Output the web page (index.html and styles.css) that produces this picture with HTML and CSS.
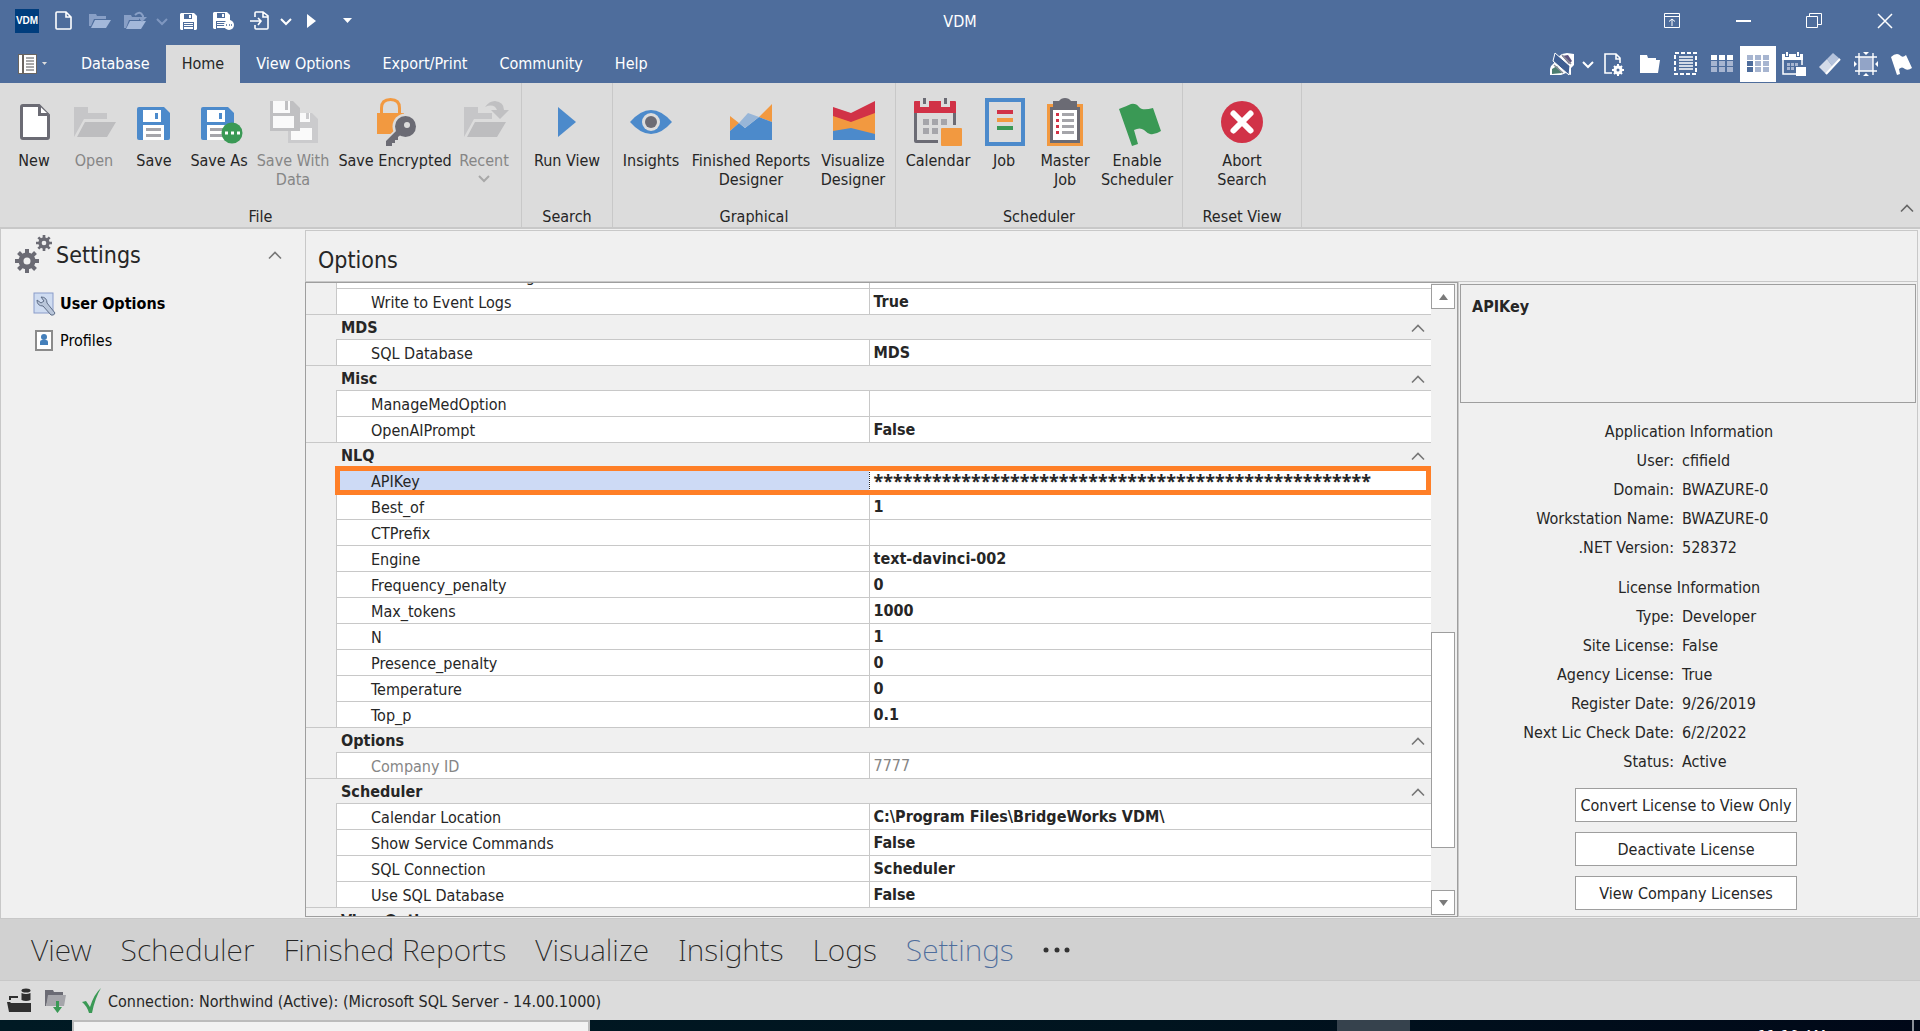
FILE: index.html
```html
<!DOCTYPE html>
<html lang="en">
<head>
    <meta charset="UTF-8">
    <meta name="viewport" content="width=device-width, initial-scale=1.0">
    <title>VDM</title>
    <link rel="stylesheet" href="styles.css">
</head>
<body>
    <!-- Shared shapes -->
    <svg class="defs" aria-hidden="true">
        <symbol id="chevron-down" viewBox="0 0 12 12"><path d="M1 4l5 5 5-5" fill="none" stroke="currentColor" stroke-width="2"/></symbol>
        <symbol id="chevron-up" viewBox="0 0 16 10"><path d="M2 8.500l6-6 6 6" fill="none" stroke="currentColor" stroke-width="1.600"/></symbol>
        <symbol id="floppy" viewBox="0 0 33 33">
            <path d="M2 0h25l6 6v25q0 2-2 2H2q-2 0-2-2V2q0-2 2-2z" fill="#4c8acb"/>
            <path d="M6 3h18v12H6zM6 18h21v15H6z" fill="#fff"/>
            <path d="M18 6h3v6h-3z" fill="#4c8acb"/>
            <path d="M9 21h15v3H9zM9 27h15v3H9z" fill="#a5a5aa"/>
        </symbol>
        <symbol id="floppy-small" viewBox="0 0 17 17">
            <path d="M1 0h13l3 3v13l-1 1H1l-1-1V1z" fill="#fff"/>
            <path d="M4 1h8v5H4zM3 9h11v8H3z" fill="#4e6d9c"/>
            <path d="M9 2h2v3H9zM4 10h9v1H4zM4 12h9v1H4zM4 14h9v2H4z" fill="#fff"/>
        </symbol>
        <symbol id="gear" viewBox="0 0 24 24">
            <circle cx="12" cy="12" r="6" fill="none" stroke="#6b6b74" stroke-width="5"/>
            <path d="M12 0v5M12 19v5M0 12h5M19 12h5M3.500 3.500L7 7M17 17l3.500 3.500M3.500 20.500L7 17M17 7l3.500-3.500" stroke="#6b6b74" stroke-width="4"/>
        </symbol>
    </svg>

    <header>
        <div class="titlebar">
            <div class="quick">
                <span class="logo">VDM</span>
                <button type="button" title="New"><svg width="18" height="20"><path d="M2 1h9l5 5v11q0 1-1 1H2q-1 0-1-1V2q0-1 1-1zM11 1v5h5" fill="none" stroke="#fff" stroke-width="1.600"/></svg></button>
                <button type="button" title="Open" disabled><svg width="22" height="18"><path d="M0 2h7l1 2h9v3H5L2 14H0z" fill="#889fc6"/><path d="M6 8h16l-5 8H2z" fill="#a3b8da"/></svg></button>
                <button type="button" title="Recent" disabled><svg width="24" height="20"><path d="M0 4h7l1 2h7v3H5L2 17H0z" fill="#889fc6"/><path d="M6 10h16l-5 8H2z" fill="#a3b8da"/><path d="M11 4q5-5 8 1v3" fill="none" stroke="#889fc6" stroke-width="2"/><path d="M14 6h9l-5 5z" fill="#889fc6"/></svg></button>
                <button type="button" class="drop faint" title="Recent files" disabled><svg width="12" height="12"><use href="#chevron-down"/></svg></button>
                <button type="button" title="Save"><svg width="17" height="17"><use href="#floppy-small"/></svg></button>
                <button type="button" title="Save As"><svg width="22" height="20"><use href="#floppy-small" y="1" width="17" height="17"/><circle cx="16" cy="14" r="5" fill="#fff"/><path d="M13 14h1M16 14h1M18 14h1" stroke="#4e6d9c" stroke-width="1.500"/></svg></button>
                <button type="button" title="Export"><svg width="20" height="20"><path d="M5 6V2q0-1 1-1h7l5 4v12q0 1-1 1H6q-1 0-1-1v-3M13 1v5h5M0 10h11M8 7l3 3-3 4" fill="none" stroke="#fff" stroke-width="1.600"/></svg></button>
                <button type="button" class="drop" title="Export options"><svg width="12" height="12"><use href="#chevron-down"/></svg></button>
                <button type="button" title="Run"><svg width="10" height="16"><path d="M0 1l9 7-9 7z" fill="#fff"/></svg></button>
                <button type="button" title="Customize"><svg width="10" height="6"><path d="M0 0h9L4.500 5z" fill="#fff"/></svg></button>
            </div>
            <h1>VDM</h1>
            <div class="window-buttons">
                <button type="button" title="Ribbon display"><svg width="16" height="16" fill="none" stroke="#fff"><path d="M.5.500h15v14H.500zM.5 3.500h15M8 13V6M5 8.500L8 6l3 2.500"/></svg></button>
                <button type="button" title="Minimize"><svg width="16" height="16"><path d="M1 8h15" stroke="#fff" stroke-width="2"/></svg></button>
                <button type="button" title="Restore"><svg width="16" height="16" fill="none" stroke="#fff"><path d="M.5 3.500h11v11H.500zM3.500 3V.500h12v11h-3.500"/></svg></button>
                <button type="button" title="Close"><svg width="16" height="16"><path d="M1 1l14 14M15 1L1 15" stroke="#fff" stroke-width="1.500"/></svg></button>
            </div>
        </div>

        <div class="tabrow">
            <button type="button" class="app-menu" title="Application menu">
                <svg width="20" height="22"><path d="M0 1h19v20H0z" fill="#6a6560"/><path d="M1 2h3v18H1zM6 2h12v18H6z" fill="#fff"/><path d="M8 5h8M8 8h8M8 11h8M8 14h8M8 17h8" stroke="#555" stroke-width="1"/></svg>
                <svg width="6" height="4"><path d="M0 0h5L2.500 3z" fill="#ddd"/></svg>
            </button>
            <nav class="tabs">
                <a href="#">Database</a>
                <a href="#" class="active">Home</a>
                <a href="#">View Options</a>
                <a href="#">Export/Print</a>
                <a href="#">Community</a>
                <a href="#">Help</a>
            </nav>
            <div class="tab-tools">
                <button type="button" title="Theme"><svg width="24" height="24"><path d="M1 14l3-3V3l4 2 4-3 5-1 7 1v11l-3 3v7l-5-2-5 2H0v-6z" fill="#fff"/><path d="M12 4l6-1 4 6-3 3z" fill="#5e5480"/><path d="M2 17l5-3 5 7-10 1z" fill="#4c7d70"/><path d="M5 1l15 13-1 9L3 9z" fill="#3f5e92" stroke="#fff"/><path d="M12 3l9 9M4 13l9 8" stroke="#8a8d98" stroke-width="1.500"/></svg></button>
                <button type="button" class="drop" title="Theme list"><svg width="12" height="12"><use href="#chevron-down"/></svg></button>
                <button type="button" title="Page setup"><svg width="22" height="24"><path d="M9 21H2V2h11l4 4v5M13 2v5h4" fill="none" stroke="#fff" stroke-width="1.600"/><circle cx="15" cy="18" r="3" fill="none" stroke="#fff" stroke-width="3"/><path d="M15 12v3M15 21v3M9 18h3M18 18h3M11 14l2 2M17 20l2 2M11 22l2-2M17 16l2-2" stroke="#fff" stroke-width="2"/></svg></button>
                <button type="button" title="Folder"><svg width="22" height="20"><path d="M1 1h7l1 3h8v2h4l-2 13H1z" fill="#fff"/></svg></button>
                <button type="button" title="List"><svg width="24" height="24"><path d="M1 1h21v21H1z" fill="none" stroke="#fff" stroke-width="2" stroke-dasharray="4 2"/><path d="M5 5h14M5 8h14M5 11h14M5 14h14M5 17h14" stroke="#fff" stroke-width="1.500"/></svg></button>
                <button type="button" title="Table"><svg width="22" height="18"><path d="M0 0h6v5H0zM8 0h6v5H8zM16 0h6v5h-6z" fill="#fff"/><path d="M0 6h6v5H0zM8 6h6v5H8zM16 6h6v5h-6zM0 12h6v5H0zM8 12h6v5H8zM16 12h6v5h-6z" fill="#a7b5d0"/></svg></button>
                <button type="button" class="pressed" title="Settings grid"><svg width="22" height="18"><path d="M0 6h6v5H0zM0 12h6v5H0z" fill="#4e6d9c"/><path d="M0 0h6v5H0zM8 0h6v5H8zM16 0h6v5h-6zM8 6h6v5H8zM16 6h6v5h-6zM8 12h6v5H8zM16 12h6v5h-6z" fill="#a7b5d0"/></svg></button>
                <button type="button" title="Calendar"><svg width="24" height="24"><path d="M1 7v15h13M20 7v6" fill="none" stroke="#fff" stroke-width="1.500"/><path d="M0 2h3v3h4V2h7v3h4V2h3v6H0zM4 0h2v4H4zM15 0h2v4h-2zM14 15h10v9H14z" fill="#fff"/><path d="M5 11h3v3H5zM9 11h3v3H9zM13 11h3v3h-3zM5 15h3v3H5zM9 15h3v3H9z" fill="#a7b5d0"/></svg></button>
                <button type="button" title="Clear"><svg width="22" height="24"><path d="M8 7l6-6 7 6-7 8z" fill="#b5c3dc"/><path d="M0 15l8-8 6 8-7 7z" fill="#d5dce9"/><path d="M21 7L7 22" stroke="#fff" stroke-width="2"/></svg></button>
                <button type="button" title="Fit"><svg width="24" height="24"><path d="M5 5h14v14H5z" fill="#92a4c7"/><path d="M5 1v22M19 1v22M1 5h22M1 19h22" stroke="#fff" stroke-width="1.400"/><path d="M9 0h6l-3 3zM9 24h6l-3-3zM0 9v6l3-3zM24 9v6l-3-3z" fill="#fff"/></svg></button>
                <button type="button" title="Flag"><svg width="22" height="22"><path d="M0 4q3-3 6-3 2 0 4 2t5-1l6 13q-4 3-7 1-3-3-6 0l1 5-3 1z" fill="#fff"/></svg></button>
            </div>
        </div>

        <div class="ribbon">
            <section class="group group-file">
                <div class="commands">
                    <button type="button"><svg width="48" height="48"><path d="M13 7.500h16l9.500 9.500v22q0 1.500-1.500 1.500H13q-1.500 0-1.500-1.500V9q0-1.500 1.500-1.500z" fill="#fff" stroke="#6b6b74" stroke-width="3"/><path d="M29.500 8v8.500h9" fill="#fff" stroke="#6b6b74" stroke-width="3"/></svg><span>New</span></button>
                    <button type="button" disabled><svg width="48" height="48"><path d="M4 9h14v6h19v6H14L4 39z" fill="#c6c6c8"/><path d="M15 24h31l-9 15H7z" fill="#bdbdbf"/></svg><span>Open</span></button>
                    <button type="button"><svg width="48" height="48"><use href="#floppy" x="7" y="9" width="33" height="33"/></svg><span>Save</span></button>
                    <button type="button"><svg width="48" height="48"><use href="#floppy" x="6" y="9" width="33" height="33"/><circle cx="37" cy="35" r="10.500" fill="#3a9955"/><path d="M30 33.500h3v3h-3zM36 33.500h3v3h-3zM42 33.500h3v3h-3z" fill="#fff"/></svg><span>Save As</span></button>
                    <button type="button" disabled><svg width="48" height="48"><path d="M19 15h24l6 6v24H19z" fill="#cbcbcd"/><path d="M30 15h11v9H30zM22 30h21v12H22z" fill="#fafafa"/><path d="M37 15h3v6h-3z" fill="#cbcbcd"/><path d="M1 3h23l7 7v23H1z" fill="#c0c0c2"/><path d="M4 3h17v12H4zM4 18h21v12H4z" fill="#fafafa"/><path d="M16 3h3v9h-3z" fill="#c0c0c2"/></svg><span>Save With Data</span></button>
                    <button type="button"><svg width="48" height="48"><path d="M10.500 16V10q0-8.500 9-8.500t9 8.500v6" fill="none" stroke="#f29940" stroke-width="3"/><path d="M6 15h27v21H6z" fill="#f29940"/><circle cx="34.500" cy="28.500" r="13" fill="#dcdcdc"/><path d="M28 28L12 43v5h14l12-14z" fill="#dcdcdc"/><path d="M27 31L15 43v5h6v-3h3v-3h3v-3l5-4z" fill="#6b6b74"/><circle cx="34.500" cy="28.500" r="10.500" fill="#6b6b74"/><circle cx="36" cy="27" r="3" fill="#dcdcdc"/></svg><span>Save Encrypted</span></button>
                    <button type="button" disabled><svg width="48" height="48"><path d="M4 9h14v6h14v6H14L4 39z" fill="#c6c6c8"/><path d="M15 24h31l-9 15H7z" fill="#bdbdbf"/><path d="M25 9q4-6 10-6 9 1 9 9h5l-9 9-9-9h6q-3-7-12-3z" fill="#c0c0c2"/></svg><span>Recent</span><svg class="more" width="12" height="12"><use href="#chevron-down"/></svg></button>
                </div>
                <h2>File</h2>
            </section>
            <section class="group group-search">
                <div class="commands">
                    <button type="button"><svg width="48" height="48"><path d="M15 9l18 15-18 15z" fill="#4c8acb"/></svg><span>Run View</span></button>
                </div>
                <h2>Search</h2>
            </section>
            <section class="group group-graphical">
                <div class="commands">
                    <button type="button"><svg width="48" height="48"><path d="M3 24q21-24 42 0-21 24-42 0z" fill="#4c8acb"/><circle cx="24" cy="24" r="9" fill="#dcdcdc"/><circle cx="24" cy="24" r="6" fill="#6b6b74"/></svg><span>Insights</span></button>
                    <button type="button"><svg width="48" height="48"><path d="M3 18l9 7-9 8zM32 19L45 6v18z" fill="#f29940"/><path d="M3 33l9-8 6 5 14-11 13 5v18H3z" fill="#4c8acb"/><path d="M12 25l9-10 11 4-14 11z" fill="#98b6d8"/></svg><span>Finished Reports Designer</span></button>
                    <button type="button"><svg width="48" height="48"><path d="M4 9l18 6L46 3v13L22 25 4 19z" fill="#d13247"/><path d="M4 18l18 6 24-9v22H4z" fill="#f29940"/><path d="M4 33l18-3 24 6v6H4z" fill="#4c8acb"/></svg><span>Visualize Designer</span></button>
                </div>
                <h2>Graphical</h2>
            </section>
            <section class="group group-scheduler">
                <div class="commands">
                    <button type="button"><svg width="48" height="48"><path d="M0 15h3v27h21v3H2q-2 0-2-2zM39 15h3v12h-3zM9 0h3v6H9zM30 0h3v6h-3z" fill="#6b6b74"/><path d="M1 3h5v6h9V3h12v6h9V3h5q1 0 1 1v11H0V4q0-1 1-1z" fill="#d13247"/><path d="M9 21h6v6H9zM18 21h6v6h-6zM27 21h6v6h-6zM9 30h6v6H9zM18 30h6v6h-6z" fill="#a5a5aa"/><rect x="27" y="30" width="21" height="18" rx="1" fill="#f29940"/></svg><span>Calendar</span></button>
                    <button type="button"><svg width="48" height="48"><rect x="7" y="2" width="36" height="44" fill="none" stroke="#4c8acb" stroke-width="4"/><path d="M17 12h16v4H17z" fill="#d13247"/><path d="M17 20h16v4H17z" fill="#f29940"/><path d="M17 28h16v4H17z" fill="#3a9955"/></svg><span>Job</span></button>
                    <button type="button"><svg width="48" height="48"><path d="M6 6h36v42H6z" fill="#f29940"/><path d="M9 9h30v36H9zM12 3h6q2-3 6-3t6 3h6v9H12z" fill="#6b6b74"/><path d="M12 12h24v30H12z" fill="#fff"/><path d="M15 15h3v3h-3zM15 21h3v3h-3zM15 27h3v3h-3zM15 33h3v3h-3z" fill="#d13247"/><path d="M21 15h12v3H21zM21 21h12v3H21zM21 27h12v3H21zM21 33h12v3H21z" fill="#a5a5aa"/></svg><span>Master Job</span></button>
                    <button type="button"><svg width="48" height="48"><path d="M6 11q8-3 12-5 5-1 8 3t14 1l8 23q-6 4-11 3-3-1-6-4-4-3-10 0l4 14-6 2z" fill="#3a9955"/></svg><span>Enable Scheduler</span></button>
                </div>
                <h2>Scheduler</h2>
            </section>
            <section class="group group-reset">
                <div class="commands">
                    <button type="button"><svg width="48" height="48"><circle cx="24" cy="24" r="21" fill="#d13247"/><path d="M15.500 15.500l17 17M32.500 15.500l-17 17" stroke="#fff" stroke-width="6" stroke-linecap="round"/></svg><span>Abort Search</span></button>
                </div>
                <h2>Reset View</h2>
            </section>
            <button type="button" class="collapse" title="Collapse the ribbon"><svg width="16" height="10"><use href="#chevron-up"/></svg></button>
        </div>
    </header>

    <main>
        <aside class="sidebar">
            <div class="sidebar-head">
                <svg width="40" height="40"><use href="#gear" x="1" y="14" width="24" height="24"/><use href="#gear" x="22" y="0" width="16" height="16"/></svg>
                <h2>Settings</h2>
                <button type="button" title="Collapse"><svg width="16" height="10"><use href="#chevron-up"/></svg></button>
            </div>
            <ul>
                <li><a href="#" class="current"><svg width="24" height="24"><rect x="2" y="1" width="19" height="20" fill="#cfdcf1" stroke="#8a9cc9"/><path d="M5 8q0 6 6 6l8 9q3 1 4-2L15 11q0-6-6-6l3 4-3 2z" fill="#b9c6da" stroke="#5d6c86"/></svg>User Options</a></li>
                <li><a href="#"><svg width="24" height="24"><rect x="4" y="2" width="16" height="19" fill="#fff" stroke="#8b8b8b" stroke-width="2"/><circle cx="12" cy="8" r="3" fill="#4580bb"/><path d="M8 16v-3q0-2 2-2h4q2 0 2 2v3z" fill="#4580bb"/></svg>Profiles</a></li>
            </ul>
        </aside>

        <div class="content">
            <h2>Options</h2>
            <div class="panes">
                <section class="grid-pane">
                    <div class="grid-scroll">
                        <table>
                            <colgroup><col class="col-indent"><col><col class="col-value"></colgroup>
                            <tbody>
                                <tr><td></td><th scope="row">Write Errors to Catalog</th><td>True</td></tr>
                                <tr><td></td><th scope="row">Write to Event Logs</th><td>True</td></tr>
                                <tr class="category"><td></td><th colspan="2">MDS<svg width="16" height="10"><use href="#chevron-up"/></svg></th></tr>
                                <tr><td></td><th scope="row">SQL Database</th><td>MDS</td></tr>
                                <tr class="category"><td></td><th colspan="2">Misc<svg width="16" height="10"><use href="#chevron-up"/></svg></th></tr>
                                <tr><td></td><th scope="row">ManageMedOption</th><td></td></tr>
                                <tr><td></td><th scope="row">OpenAIPrompt</th><td>False</td></tr>
                                <tr class="category"><td></td><th colspan="2">NLQ<svg width="16" height="10"><use href="#chevron-up"/></svg></th></tr>
                                <tr class="selected"><td></td><th scope="row">APIKey</th><td class="masked">***************************************************</td></tr>
                                <tr><td></td><th scope="row">Best_of</th><td>1</td></tr>
                                <tr><td></td><th scope="row">CTPrefix</th><td></td></tr>
                                <tr><td></td><th scope="row">Engine</th><td>text-davinci-002</td></tr>
                                <tr><td></td><th scope="row">Frequency_penalty</th><td>0</td></tr>
                                <tr><td></td><th scope="row">Max_tokens</th><td>1000</td></tr>
                                <tr><td></td><th scope="row">N</th><td>1</td></tr>
                                <tr><td></td><th scope="row">Presence_penalty</th><td>0</td></tr>
                                <tr><td></td><th scope="row">Temperature</th><td>0</td></tr>
                                <tr><td></td><th scope="row">Top_p</th><td>0.1</td></tr>
                                <tr class="category"><td></td><th colspan="2">Options<svg width="16" height="10"><use href="#chevron-up"/></svg></th></tr>
                                <tr class="readonly"><td></td><th scope="row">Company ID</th><td>7777</td></tr>
                                <tr class="category"><td></td><th colspan="2">Scheduler<svg width="16" height="10"><use href="#chevron-up"/></svg></th></tr>
                                <tr><td></td><th scope="row">Calendar Location</th><td>C:\Program Files\BridgeWorks VDM\</td></tr>
                                <tr><td></td><th scope="row">Show Service Commands</th><td>False</td></tr>
                                <tr><td></td><th scope="row">SQL Connection</th><td>Scheduler</td></tr>
                                <tr><td></td><th scope="row">Use SQL Database</th><td>False</td></tr>
                                <tr class="category"><td></td><th colspan="2">View Options<svg width="16" height="10"><use href="#chevron-up"/></svg></th></tr>
                            </tbody>
                        </table>
                    </div>
                    <div class="scrollbar">
                        <button type="button" title="Scroll up"><svg width="9" height="6"><path d="M4.500 0L9 6H0z" fill="#7a7a7a"/></svg></button>
                        <div class="track"><div class="thumb"></div></div>
                        <button type="button" title="Scroll down"><svg width="9" height="6"><path d="M0 0h9L4.500 6z" fill="#7a7a7a"/></svg></button>
                    </div>
                </section>

                <section class="info-pane">
                    <div class="description"><h3>APIKey</h3></div>
                    <h4>Application Information</h4>
                    <dl>
                        <dt>User:</dt><dd>cfifield</dd>
                        <dt>Domain:</dt><dd>BWAZURE-0</dd>
                        <dt>Workstation Name:</dt><dd>BWAZURE-0</dd>
                        <dt>.NET Version:</dt><dd>528372</dd>
                    </dl>
                    <h4>License Information</h4>
                    <dl>
                        <dt>Type:</dt><dd>Developer</dd>
                        <dt>Site License:</dt><dd>False</dd>
                        <dt>Agency License:</dt><dd>True</dd>
                        <dt>Register Date:</dt><dd>9/26/2019</dd>
                        <dt>Next Lic Check Date:</dt><dd>6/2/2022</dd>
                        <dt>Status:</dt><dd>Active</dd>
                    </dl>
                    <div class="license-buttons">
                        <button type="button">Convert License to View Only</button>
                        <button type="button">Deactivate License</button>
                        <button type="button">View Company Licenses</button>
                    </div>
                </section>
            </div>
        </div>
    </main>

    <nav class="modules">
        <a href="#">View</a>
        <a href="#">Scheduler</a>
        <a href="#">Finished Reports</a>
        <a href="#">Visualize</a>
        <a href="#">Insights</a>
        <a href="#">Logs</a>
        <a href="#" class="current">Settings</a>
        <button type="button" title="More"><svg width="27" height="6" fill="#333"><circle cx="3" cy="3" r="2.500"/><circle cx="14" cy="3" r="2.500"/><circle cx="24" cy="3" r="2.500"/></svg></button>
    </nav>

    <footer class="status">
        <svg width="24" height="26"><path d="M0 14h3l1 1h20v9H2zM2 12V8h9v2H4v2z" fill="#2f2f2f"/><ellipse cx="19" cy="2.500" rx="4.500" ry="2" fill="#2f2f2f"/><path d="M14.500 5q4.500 2 9 0v7q-4.500 2-9 0z" fill="#2f2f2f"/></svg>
        <svg width="22" height="26"><path d="M0 2h8l1 2h9v4H4L1 18H0z" fill="#6b6b74"/><path d="M3 7h18l-2 11H1z" fill="#a5a5aa"/><path d="M11 13h3v6h3l-4.500 6L8 19h3z" fill="#3a9955"/></svg>
        <svg width="22" height="26"><path d="M1 14l4-1 4 6Q13 6 20 0q-6 10-9 25H8Q6 18 1 14z" fill="#3a9955"/></svg>
        <span>Connection: Northwind (Active): (Microsoft SQL Server - 14.00.1000)</span>
    </footer>

    <!-- Strip of the desktop taskbar under the window -->
    <div class="taskbar">
        <div class="task-search"></div>
        <div class="task-active"></div>
        <time>11:19 AM</time>
    </div>
</body>
</html>
```
FILE: styles.css
```css
* {
    box-sizing: border-box;
}

body {
    margin: 0;
    height: 100vh;
    display: flex;
    flex-direction: column;
    overflow: hidden;
    font-family: "DejaVu Sans Condensed", "DejaVu Sans", sans-serif;
    font-size: 16px;
    line-height: 19px;
    color: #262626;
    background-color: #f0f0f0;
}

h1, h2, h3, h4, ul, dl, dd {
    margin: 0;
    padding: 0;
    font-weight: normal;
}

button {
    font: inherit;
    color: inherit;
    padding: 0;
    border: none;
    background: none;
}

a {
    color: inherit;
    text-decoration: none;
}

svg {
    display: block;
    flex: none;
}

.defs {
    position: absolute;
    width: 0;
    height: 0;
}

/* Title bar */
.titlebar {
    display: grid;
    grid-template-columns: 1fr auto 1fr;
    align-items: center;
    height: 45px;
    padding-bottom: 3px;
    color: #fff;
    background-color: #4e6d9c;
}

.titlebar h1 {
    font-size: 16px;
}

.quick {
    display: flex;
    align-items: center;
    padding-left: 15px;
}

.quick button,
.tab-tools button {
    display: flex;
    align-items: center;
    justify-content: center;
    width: 36px;
    height: 36px;
    color: #fff;
}

.quick .drop,
.tab-tools .drop {
    width: 16px;
}

.quick .faint {
    color: #7f97c0;
}

.logo {
    width: 24px;
    margin-right: 7px;
    font-family: "Liberation Sans", sans-serif;
    font-size: 10px;
    font-weight: bold;
    line-height: 24px;
    text-align: center;
    background-color: #003d7d;
}

.window-buttons {
    display: flex;
    justify-content: flex-end;
}

.window-buttons button {
    display: flex;
    align-items: center;
    justify-content: center;
    width: 71px;
    height: 36px;
}

/* Tabs */
.tabrow {
    display: flex;
    height: 38px;
    color: #fff;
    background-color: #4e6d9c;
}

.app-menu {
    display: flex;
    align-items: center;
    gap: 4px;
    width: 65px;
    padding-left: 18px;
}

.tabs {
    display: flex;
}

.tabs a {
    padding: 0 16px;
    line-height: 38px;
}

.tabs .active {
    color: #262626;
    background-color: #dcdcdc;
}

.tab-tools {
    display: flex;
    align-items: center;
    margin-left: auto;
}

.tab-tools .pressed {
    background-color: #fff;
}

/* Ribbon */
.ribbon {
    display: flex;
    height: 146px;
    background-color: #dcdcdc;
    border-bottom: 2px solid #c8c8c8;
}

.group {
    display: flex;
    flex-direction: column;
    justify-content: space-between;
    padding-top: 15px;
    border-right: 1px solid #c8c8c8;
}

.group h2 {
    font-size: 16px;
    line-height: 20px;
    text-align: center;
}

.commands {
    display: grid;
    justify-content: center;
}

.commands button {
    display: flex;
    flex-direction: column;
    align-items: center;
    justify-content: flex-start;
}

.commands svg {
    overflow: visible;
}

.commands span {
    margin-top: 5px;
}

.commands button:disabled {
    color: #868686;
}

.group-file .commands {
    grid-template-columns: 60px 60px 60px 70px 78px 126px 52px;
    padding: 0 11px 0 4px;
}

.group-search .commands {
    grid-template-columns: 90px;
}

.group-graphical .commands {
    grid-template-columns: 76px 124px 80px;
    padding-right: 2px;
}

.group-scheduler .commands {
    grid-template-columns: 84px 48px 74px 70px;
    padding-right: 10px;
}

.group-reset .commands {
    grid-template-columns: 64px;
    padding: 0 27px;
}

.commands .more {
    margin-top: 2px;
    color: #a8a8a8;
}

.collapse {
    align-self: flex-end;
    margin-left: auto;
    padding: 14px 5px;
    color: #666;
}

/* Main area */
main {
    display: flex;
    flex: 1;
    min-height: 0;
    border-bottom: 1px solid #c8c8c8;
}

.sidebar {
    width: 305px;
    color: #000;
    border-left: 1px solid #c8c8c8;
}

.sidebar-head {
    display: flex;
    align-items: center;
    gap: 2px;
    height: 56px;
    padding: 0 22px 4px 13px;
    color: #262626;
}

.sidebar-head button {
    margin-left: auto;
    color: #777;
}

.sidebar-head h2,
.content > h2 {
    font-size: 23px;
    line-height: 28px;
}

.sidebar ul {
    list-style: none;
    padding-left: 31px;
}

.sidebar li a {
    display: flex;
    align-items: center;
    gap: 4px;
    height: 37px;
}

.sidebar .current {
    font-weight: bold;
}

.content {
    display: flex;
    flex: 1;
    flex-direction: column;
    min-width: 0;
    margin: 1px 2px 1px 0;
    border: 1px solid #c8c8c8;
    border-width: 1px 1px 0 1px;
}

.content > h2 {
    height: 51px;
    padding: 15px 12px 0;
    border-bottom: 1px solid #c8c8c8;
}

.panes {
    display: flex;
    flex: 1;
    min-height: 0;
    margin-left: -1px;
}

.grid-pane {
    display: flex;
    flex: 1;
    min-width: 0;
    border: 1px solid #9e9e9e;
}

.grid-scroll {
    flex: 1;
    min-width: 0;
    overflow: hidden;
}

/* Property grid, scrolled part of the way into its first row */
table {
    width: 100%;
    margin-top: -21px;
    table-layout: fixed;
    border-collapse: separate;
    border-spacing: 0;
}

.col-indent {
    width: 30px;
}

.col-value {
    width: 50%;
}

tr {
    position: relative;
    height: 26px;
}

td, th {
    padding: 0 4px;
    font-weight: bold;
    text-align: left;
    white-space: nowrap;
    background-color: #fff;
    border-top: 1px solid #c8c8c8;
    border-left: 1px solid #c8c8c8;
}

th {
    padding: 2px 34px 0;
    font-weight: normal;
}

td:first-child {
    background-color: #f0f0f0;
    border: none;
}

.category {
    height: 25px;
}

.category td:first-child {
    border-top: 1px solid #c8c8c8;
}

.category th {
    padding: 0 5px;
    font-weight: bold;
    background-color: #f0f0f0;
    border-left: none;
}

.category svg {
    float: right;
    margin-top: 5px;
    color: #777;
}

.readonly th,
.readonly td {
    font-weight: normal;
    color: #868686;
}

.selected th {
    background-color: #cddaf5;
}

.selected td:last-child {
    border-left: 1px dotted #262626;
}

.selected td:first-child::after {
    content: "";
    position: absolute;
    z-index: 1;
    top: -1px;
    right: 0;
    bottom: -2px;
    left: 29px;
    border: 5px solid #ff7f27;
}

.masked {
    font-family: "Noto Sans", sans-serif;
    font-size: 18px;
    line-height: 16px;
}

.scrollbar {
    display: flex;
    flex-direction: column;
    width: 26px;
    padding: 1px 2px 1px 0;
}

.scrollbar button {
    display: flex;
    align-items: center;
    justify-content: center;
    height: 25px;
    background-color: #fff;
    border: 1px solid #9e9e9e;
}

.track {
    display: grid;
    flex: 1;
    grid-template-rows: 324fr 216fr 42fr;
}

.thumb {
    grid-row: 2;
    background-color: #fff;
    border: 1px solid #9e9e9e;
}

/* Information pane */
.info-pane {
    display: flex;
    flex-direction: column;
    width: 459px;
    border-left: 1px solid #c8c8c8;
    border-bottom: 1px solid #c8c8c8;
}

.description {
    height: 119px;
    margin: 2px 1px 15px;
    padding: 12px 11px;
    border: 1px solid #9e9e9e;
}

.description h3 {
    font-size: 16px;
    font-weight: bold;
}

.info-pane h4 {
    padding-left: 2px;
    font-size: 16px;
    line-height: 28px;
    text-align: center;
}

.info-pane dl {
    display: grid;
    grid-template-columns: 215px 1fr;
    column-gap: 8px;
    margin-bottom: 12px;
    line-height: 29px;
}

.info-pane dt {
    text-align: right;
}

.license-buttons {
    display: flex;
    flex-direction: column;
    align-items: center;
    gap: 10px;
    padding-right: 4px;
}

.license-buttons button {
    width: 222px;
    height: 34px;
    white-space: nowrap;
    background-color: #fff;
    border: 1px solid #9e9e9e;
}

/* Bottom bars */
.modules {
    display: flex;
    align-items: center;
    gap: 29px;
    height: 62px;
    padding: 0 31px;
    font-family: "Noto Sans", sans-serif;
    font-size: 30px;
    font-weight: 200;
    line-height: 40px;
    background-color: #d1d1d1;
    border-bottom: 1px solid #c8c8c8;
}

.modules .current {
    color: #4e6d9c;
}

.status {
    display: flex;
    align-items: center;
    gap: 14px;
    height: 39px;
    padding: 1px 7px 0;
    background-color: #dcdcdc;
}

.status span {
    margin-left: -9px;
}

.taskbar {
    display: flex;
    height: 11px;
    overflow: hidden;
    color: #fff;
    background: linear-gradient(to right, #001a24, #00141f 60%, #000818);
}

.task-search {
    width: 27%;
    margin-left: 72px;
    background-color: #f2f2f2;
    border: 2px solid #bcbcbc;
    border-bottom: none;
}

.task-active {
    width: 73px;
    margin-left: auto;
    background-color: #36424d;
}

.taskbar time {
    width: 504px;
    margin-right: 6px;
    padding: 7px 86px 0 0;
    text-align: right;
    border-right: 2px solid #8a8f98;
}
```
